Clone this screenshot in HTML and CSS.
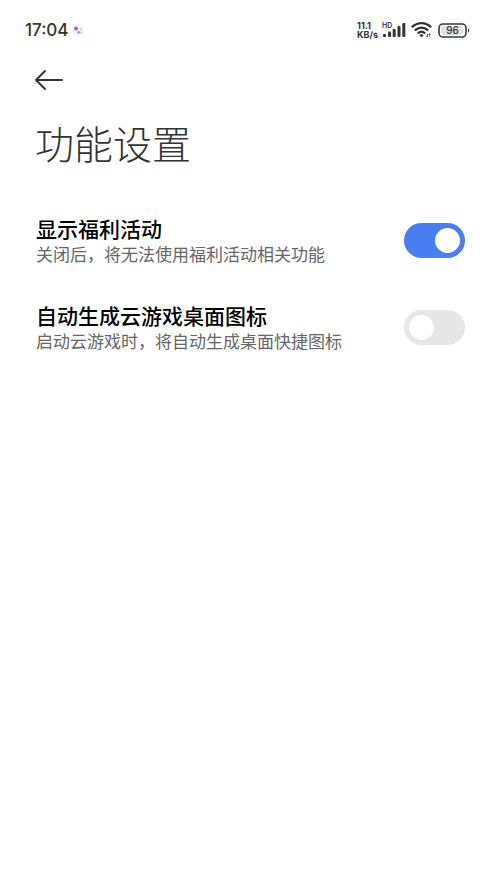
FILE: index.html
```html
<!DOCTYPE html>
<html lang="zh-CN">
<head>
<meta charset="utf-8">
<meta name="viewport" content="width=device-width, initial-scale=1">
<title>功能设置</title>
<link rel="stylesheet" href="styles.css">
</head>
<body>
<div class="status">
  <span class="clock">17:04</span>
  <svg class="notice" width="12" height="12" viewBox="0 0 12 12" aria-hidden="true">
    <circle cx="6" cy="6" r="6" fill="#f8f3fc"/>
    <circle cx="4" cy="4.5" r="2" fill="#8577c6"/>
    <circle cx="8.7" cy="5.2" r="1.3" fill="#b7dfb2"/>
    <circle cx="6.6" cy="8.4" r="1.4" fill="#9c9be0"/>
    <circle cx="9" cy="8.4" r="1" fill="#f0b6cf"/>
  </svg>
  <div class="indicators">
    <span class="speed"><span>11.1</span><span>KB/s</span></span>
    <span class="cell">
      <span class="hd">HD</span>
      <svg width="23" height="14" viewBox="0 0 23 14" fill="#333" aria-hidden="true">
        <rect x="0" y="11" width="3" height="3" rx="1"/>
        <rect x="5" y="8.5" width="3" height="5.5" rx="1"/>
        <rect x="9.700" y="6" width="3" height="8" rx="1"/>
        <rect x="14.500" y="3" width="3" height="11" rx="1"/>
        <rect x="19.300" y="0" width="3" height="14" rx="1"/>
      </svg>
    </span>
    <svg class="wifi" width="22" height="16" viewBox="0 0 22 16" aria-hidden="true">
      <g fill="none" stroke="#333" stroke-width="2.200">
        <path d="M.8 5.300C6.500-.3 14.500-.3 20.200 5.300"/>
        <path d="M3.800 8.500c4-3.900 9.400-3.900 13.400 0"/>
        <path d="M6.800 11.500c2.200-2.100 5.200-2.100 7.400 0"/>
      </g>
      <path d="M8.300 13c1.300-1.100 3.100-1.100 4.400 0l-2.200 2.400z" fill="#333"/>
      <path d="M16.500 11.500v3.700l-1.500-1.500M18.500 15v-3.700l1.500 1.500" fill="none" stroke="#666" stroke-width=".9"/>
    </svg>
    <svg class="battery" width="32" height="15" viewBox="0 0 32 15" role="img" aria-label="96">
      <rect x="1" y="1" width="27" height="13" rx="4" fill="#fff" stroke="#3a3a3a" stroke-width="1.600"/>
      <rect x="3" y="3" width="22" height="9" rx="2" fill="#e2e2e2"/>
      <path d="M30 5.500c1.600.3 1.600 3.700 0 4z" fill="#333"/>
      <text x="14.500" y="11" text-anchor="middle">96</text>
    </svg>
  </div>
</div>
<header>
  <button class="back" type="button" aria-label="返回">
    <svg width="28" height="20" viewBox="0 0 28 20" fill="none" stroke="#333" stroke-width="1.800" stroke-linecap="round" stroke-linejoin="round" aria-hidden="true">
      <path d="M27 10H1M10 1L1 10l9 9"/>
    </svg>
  </button>
  <h1>功能设置</h1>
</header>
<main>
  <label class="row">
    <span class="copy">
      <span class="name">显示福利活动</span>
      <span class="hint">关闭后，将无法使用福利活动相关功能</span>
    </span>
    <input class="switch" type="checkbox" role="switch" checked>
  </label>
  <label class="row">
    <span class="copy">
      <span class="name">自动生成云游戏桌面图标</span>
      <span class="hint">启动云游戏时，将自动生成桌面快捷图标</span>
    </span>
    <input class="switch" type="checkbox" role="switch">
  </label>
</main>
</body>
</html>
```
FILE: styles.css
```css
* { box-sizing: border-box; }
body {
  margin: 0;
  background: #fff;
  color: #000;
  font-family: "Noto Sans", "Noto Sans CJK SC", sans-serif;
}
.status {
  display: flex;
  align-items: center;
  height: 60px;
  padding: 0 30px 0 25px;
  color: #333;
}
.clock {
  font: 500 17px/24px Inter, sans-serif;
}
.notice { margin-left: 4px; }
.indicators {
  display: flex;
  align-items: center;
  gap: 5px;
  margin-left: auto;
}
.speed {
  display: flex;
  flex-direction: column;
  font: 700 9px/9px Inter, sans-serif;
}
.cell {
  position: relative;
  display: flex;
}
.hd {
  position: absolute;
  top: -1px;
  left: -1px;
  font: 600 7px/7px Inter, sans-serif;
}
.battery text {
  font: 500 10px Inter, sans-serif;
  fill: #333;
}
header { padding: 8px 35px 0; }
.back {
  display: flex;
  align-items: center;
  height: 24px;
  padding: 0;
  border: 0;
  background: none;
}
h1 {
  margin: 20px 0 0;
  color: #333;
  font: 300 39px/60px "Noto Sans CJK SC", sans-serif;
}
main { padding: 38px 35px 0 36px; }
.row {
  display: flex;
  align-items: center;
  justify-content: space-between;
  gap: 16px;
  margin-bottom: 27px;
  padding: 4px 0;
}
.copy {
  display: flex;
  flex-direction: column;
  font-family: "Noto Sans CJK SC", sans-serif;
}
.name {
  font-weight: 500;
  font-size: 21px;
  line-height: 28px;
}
.hint {
  color: #666;
  font-size: 17px;
  line-height: 24px;
}
.switch {
  display: flex;
  flex: none;
  align-items: center;
  width: 61px;
  height: 35px;
  margin: 0;
  padding: 0 5px;
  border-radius: 18px;
  background: #e6e6e6;
  appearance: none;
}
.switch::before {
  width: 25px;
  height: 25px;
  border-radius: 50%;
  background: #fff;
  content: "";
}
.switch:checked {
  justify-content: flex-end;
  background: #477ff3;
}
```
